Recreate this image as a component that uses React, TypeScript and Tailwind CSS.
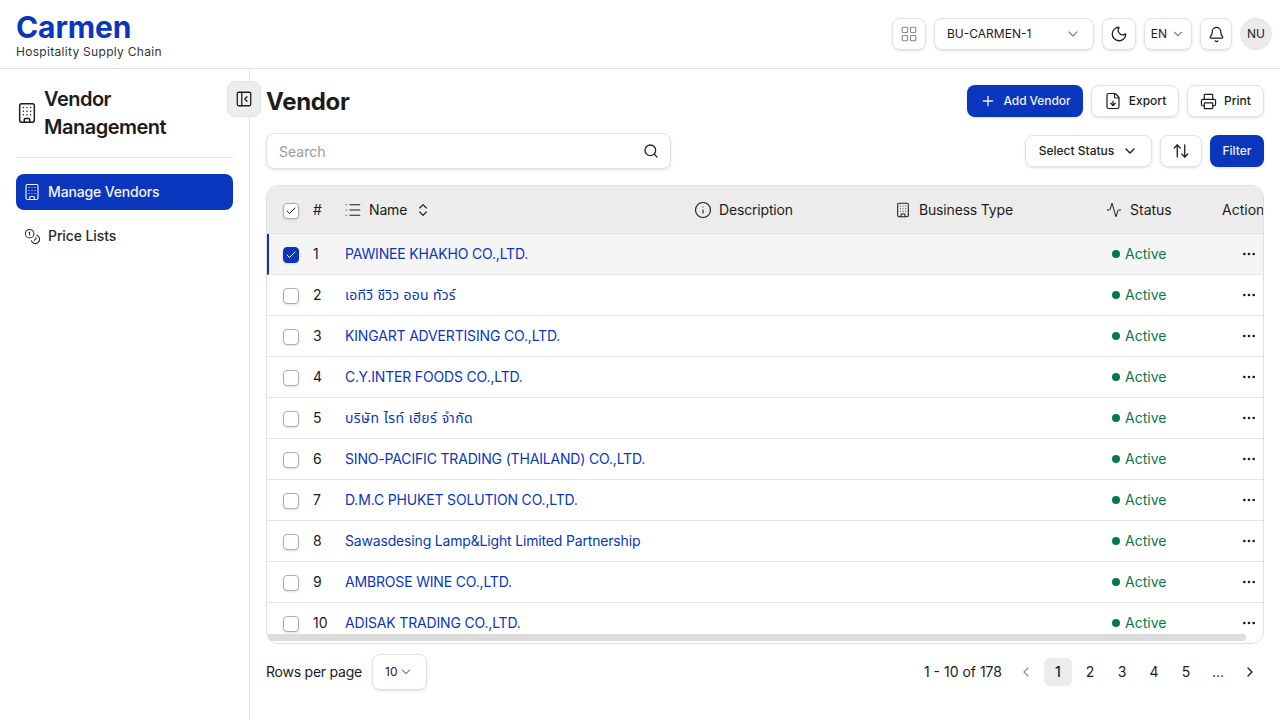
import { Building, Plus, FileDown, Printer, ChevronDown, ArrowUpDown, Search, List, ChevronsUpDown, Info, Activity, Ellipsis, Check, ChevronLeft, ChevronRight, Moon, Bell, LayoutGrid, PanelLeftClose, Coins } from "lucide-react";

const rows = [
  "PAWINEE KHAKHO CO.,LTD.",
  "เอทีวี ชีวิว ออน ทัวร์",
  "KINGART ADVERTISING CO.,LTD.",
  "C.Y.INTER FOODS CO.,LTD.",
  "บริษัท ไรท์ เฮียร์ จำกัด",
  "SINO-PACIFIC TRADING (THAILAND) CO.,LTD.",
  "D.M.C PHUKET SOLUTION CO.,LTD.",
  "Sawasdesing Lamp&Light Limited Partnership",
  "AMBROSE WINE CO.,LTD.",
  "ADISAK TRADING CO.,LTD.",
];

const font = "font-['Inter','Noto_Sans','Noto_Sans_Thai',sans-serif]";

function Box({ on, head }: { on?: boolean; head?: boolean }) {
  return (
    <span className={`flex h-4 w-4 items-center justify-center rounded-[4px] border shadow-sm ${on ? "border-[#0a36bd] bg-[#0a36bd] text-white" : "border-[#a9adbb] bg-white text-[#222]"}`}>
      {(on || head) && <Check size={12} strokeWidth={2} />}
    </span>
  );
}

export default function App() {
  return (
    <div className={`flex h-[720px] w-[1280px] flex-col overflow-hidden bg-white text-[#1c1c1c] ${font}`}>
      <header className="flex h-[69px] shrink-0 items-center justify-between border-b border-[#e0e0e0] pl-4 pr-2">
        <div className="mt-[2px] flex flex-col">
          <span className="text-[30px] font-bold leading-[32px] tracking-[-0.1px] text-[#0a36bd]">Carmen</span>
          <span className="mt-px text-xs leading-[16px] tracking-[0.3px] text-[#333]">Hospitality Supply Chain</span>
        </div>
        <div className="flex items-center">
          <div className="flex h-8 w-[34px] items-center justify-center rounded-lg border border-[#e2e2e2] text-[#8a8a8a] shadow-sm"><LayoutGrid size={18} strokeWidth={1.5} /></div>
          <div className="ml-2 flex h-8 w-[160px] items-center justify-between rounded-lg border border-[#e2e2e2] pl-3 pr-[12px] text-xs shadow-sm"><span>BU-CARMEN-1</span><ChevronDown size={16} className="text-[#8a8a8a]" /></div>
          <div className="ml-2 flex h-8 w-[34px] items-center justify-center rounded-lg border border-[#e2e2e2] shadow-sm"><Moon size={18} strokeWidth={1.7} /></div>
          <div className="ml-2 flex h-8 w-[48px] items-center justify-center gap-1 rounded-lg border border-[#e2e2e2] text-xs shadow-sm"><span>EN</span><ChevronDown size={14} className="text-[#8a8a8a]" /></div>
          <div className="ml-2 flex h-8 w-8 items-center justify-center rounded-lg border border-[#e2e2e2] shadow-sm"><Bell size={17} strokeWidth={1.7} /></div>
          <div className="ml-2 flex h-8 w-8 items-center justify-center rounded-full border border-[#e4e4e4] bg-[#ebebeb] text-xs">NU</div>
        </div>
      </header>

      <div className="relative flex min-h-0 flex-1">
        <aside className="w-[250px] shrink-0 border-r border-[#e0e0e0] px-4 pt-4">
          <div className="flex items-center gap-[6px] border-b border-[#e0e0e0] pb-4">
            <Building size={22} strokeWidth={1.6} className="shrink-0" />
            <h2 className="text-xl font-semibold leading-7 tracking-[-0.5px]">Vendor Management</h2>
          </div>
          <div className="mt-4 flex h-9 items-center gap-[7px] rounded-lg bg-[#0a36bd] px-[7px] text-sm font-medium tracking-[-0.15px] text-[#f2f4fb]">
            <Building size={18} strokeWidth={1.5} />
            <span>Manage Vendors</span>
          </div>
          <div className="mt-2 flex h-9 items-center gap-[7px] px-2 text-sm font-medium tracking-[-0.1px] text-[#2a2a2a]">
            <Coins size={17} strokeWidth={1.5} />
            <span>Price Lists</span>
          </div>
        </aside>
        <button className="absolute left-[227px] top-[12px] flex h-9 w-[34px] items-center justify-center rounded-lg border border-[#e2e2e2] bg-[#ededed]"><PanelLeftClose size={18} strokeWidth={1.7} /></button>

        <main className="flex min-w-0 flex-1 flex-col px-4 pt-4">
          <div className="flex h-8 items-center justify-between">
            <h1 className="pt-[2px] text-2xl font-bold tracking-[-0.3px]">Vendor</h1>
            <div className="flex gap-2 text-xs font-medium">
              <div className="flex h-8 w-[116px] items-center justify-center gap-2 rounded-lg bg-[#0a36bd] tracking-[-0.1px] text-[#eef1fa] shadow-sm"><Plus size={16} /><span>Add Vendor</span></div>
              <div className="flex h-8 w-[88px] items-center justify-center gap-[7px] rounded-lg border border-[#e2e2e2] shadow-sm"><FileDown size={18} strokeWidth={1.6} /><span>Export</span></div>
              <div className="flex h-8 w-[77px] items-center justify-center gap-[7px] rounded-lg border border-[#e2e2e2] shadow-sm"><Printer size={17} strokeWidth={1.7} /><span>Print</span></div>
            </div>
          </div>

          <div className="mt-4 flex items-center justify-between">
            <div className="flex h-9 w-[405px] items-center justify-between rounded-lg border border-[#e2e2e2] pl-3 pr-[11px] text-sm text-[#9a9a9a] shadow-sm"><span className="pt-[2px]">Search</span><Search size={16} className="text-[#222]" /></div>
            <div className="flex gap-2 text-xs font-medium">
              <div className="flex h-8 w-[127px] items-center justify-center gap-2 rounded-lg border border-[#e2e2e2] shadow-sm"><span>Select Status</span><ChevronDown size={16} /></div>
              <div className="flex h-8 w-[42px] items-center justify-center rounded-lg border border-[#e2e2e2] shadow-sm"><ArrowUpDown size={18} strokeWidth={1.7} /></div>
              <div className="flex h-8 w-[54px] items-center justify-center rounded-lg bg-[#0a36bd] text-[#eef1fa] shadow-sm">Filter</div>
            </div>
          </div>

          <div className="relative mt-4 h-[459px] overflow-hidden rounded-xl border border-[#e0e0e0] text-sm tracking-[-0.17px]">
            <div className="flex h-[48px] w-[1010px] items-center border-b border-[#e0e0e0] bg-[#ececec]">
              <div className="flex w-[46px] shrink-0 translate-y-px justify-end pr-[14px]"><Box head /></div>
              <div className="w-[32px] shrink-0">#</div>
              <div className="flex w-[350px] shrink-0 items-center gap-[7px]"><List size={18} strokeWidth={1.5} className="-ml-px" /><span>Name</span><ChevronsUpDown size={16} strokeWidth={1.7} className="ml-px" /></div>
              <div className="flex w-[200px] shrink-0 items-center gap-[7px]"><Info size={18} strokeWidth={1.5} className="-ml-px" /><span>Description</span></div>
              <div className="flex w-[211px] shrink-0 items-center gap-2"><Building size={16} strokeWidth={1.6} /><span>Business Type</span></div>
              <div className="flex w-[116px] shrink-0 items-center gap-2"><Activity size={16} strokeWidth={1.5} /><span className="tracking-normal">Status</span></div>
              <div className="shrink-0 tracking-normal">Action</div>
            </div>
            {rows.map((name, i) => (
              <div key={i} className={`flex h-[41px] items-center border-b border-[#e4e4e4] pt-[2px] ${i === 0 ? "border-l-2 border-l-[#0a36bd] bg-[#f5f5f5]" : ""}`}>
                <div className={`flex shrink-0 justify-end pr-[14px] ${i === 0 ? "w-[44px]" : "w-[46px]"}`}><Box on={i === 0} /></div>
                <div className="w-[32px] shrink-0 -translate-y-px tracking-normal">{i + 1}</div>
                <div className={`w-[761px] shrink-0 -translate-y-px text-[#0a36bd] ${i === 1 ? "tracking-[0.2px]" : ""} ${i === 4 ? "tracking-[0.4px]" : ""}`}>{name}</div>
                <div className="flex w-[116px] shrink-0 -translate-y-px items-center gap-[5px] pl-[6px] tracking-normal text-[#047a48]"><span className="h-2 w-2 rounded-full bg-[#047a48]" /><span>Active</span></div>
                <Ellipsis size={16} className="ml-[19px] shrink-0 -translate-y-px" />
              </div>
            ))}
            <div className="absolute bottom-[2px] left-0 h-[7px] w-[979px] rounded-full bg-[#dcdcdc]" />
          </div>

          <div className="mt-[10px] flex h-9 items-center justify-between text-sm">
            <div className="flex items-center gap-[10px]">
              <span className="tracking-[-0.23px]">Rows per page</span>
              <div className="flex h-9 w-[55px] items-center gap-0.5 rounded-lg border border-[#e2e2e2] pl-3 text-xs shadow-sm"><span>10</span><ChevronDown size={14} className="text-[#8a8a8a]" /></div>
            </div>
            <div className="flex items-center">
              <span className="mr-[8px]">1 - 10 of 178</span>
              <div className="mr-[2px] flex h-7 w-8 items-center justify-center text-[#9a9a9a]"><ChevronLeft size={16} /></div>
              <div className="flex h-7 w-7 items-center justify-center rounded-md bg-[#ececec] font-medium">1</div>
              <div className="ml-1 flex h-7 w-7 items-center justify-center">2</div>
              <div className="ml-1 flex h-7 w-7 items-center justify-center">3</div>
              <div className="ml-1 flex h-7 w-7 items-center justify-center">4</div>
              <div className="ml-1 flex h-7 w-7 items-center justify-center">5</div>
              <div className="ml-1 flex h-7 w-7 items-center justify-center">...</div>
              <div className="ml-1 flex h-7 w-7 items-center justify-center"><ChevronRight size={16} /></div>
            </div>
          </div>
        </main>
      </div>
    </div>
  );
}
